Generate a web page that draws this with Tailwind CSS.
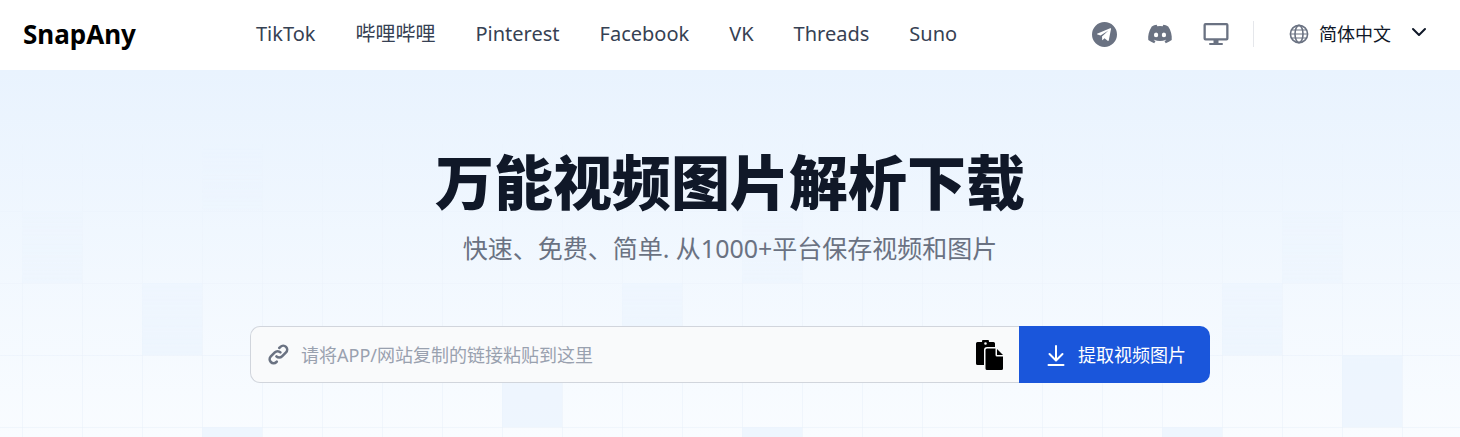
<!DOCTYPE html>
<html lang="zh-CN">
<head>
    <meta charset="UTF-8">
    <meta name="viewport" content="width=device-width, initial-scale=1.0">
    <title>SnapAny</title>
    <script src="https://cdn.jsdelivr.net/npm/@tailwindcss/browser@4"></script>
</head>
<body class="min-h-screen flex flex-col bg-white font-['Noto_Sans','Noto_Sans_CJK_SC',sans-serif]">
    <header class="flex items-center h-[70px] pb-[2px] pl-[23px] pr-[33px]">
        <a href="#" class="w-[233px] text-[26px] leading-8 font-bold text-black">SnapAny</a>
        <nav class="flex flex-1 gap-10 text-xl text-gray-700">
            <a href="#">TikTok</a>
            <a href="#">哔哩哔哩</a>
            <a href="#">Pinterest</a>
            <a href="#">Facebook</a>
            <a href="#">VK</a>
            <a href="#">Threads</a>
            <a href="#">Suno</a>
        </nav>
        <div class="flex items-center text-gray-500">
            <div class="flex items-center gap-[30px] pr-6">
                <a href="#" aria-label="Telegram">
                    <svg class="size-[25px]" viewBox="0 0 24 24" fill="currentColor"><path d="M12 0a12 12 0 1 0 0 24 12 12 0 0 0 0-24Zm6.300 6.400-2.200 11.200c-.1.7-.5.8-1.100.5l-3-2.400-1.700 1.600c-.2.2-.4.2-.5-.1l-.2-3.300 6.200-5.800-7.600 4.900-2.900-1c-.7-.2-.7-.7.1-1l12-4.900c.6-.2 1 0 .9.300Z"/></svg>
                </a>
                <a href="#" aria-label="Discord">
                    <svg class="size-[26px]" viewBox="1 1 22 22" fill="currentColor"><path d="M18.942 5.556a16.3 16.3 0 0 0-4.126-1.297c-.178.321-.385.754-.529 1.097a15.175 15.175 0 0 0-4.573 0 11.583 11.583 0 0 0-.535-1.097 16.274 16.274 0 0 0-4.129 1.3c-2.611 3.946-3.319 7.794-2.965 11.587a16.494 16.494 0 0 0 5.061 2.593 12.65 12.65 0 0 0 1.084-1.785 10.689 10.689 0 0 1-1.707-.831c.143-.106.283-.217.418-.331 3.291 1.539 6.866 1.539 10.118 0 .137.114.277.225.418.331-.541.326-1.114.606-1.71.832a12.52 12.52 0 0 0 1.084 1.785 16.46 16.46 0 0 0 5.064-2.595c.415-4.396-.709-8.209-2.973-11.589ZM8.678 14.813a1.940 1.940 0 0 1-1.800-2.045 1.930 1.930 0 0 1 1.800-2.047 1.919 1.919 0 0 1 1.800 2.047 1.930 1.930 0 0 1-1.800 2.045Zm6.644 0a1.940 1.940 0 0 1-1.800-2.045 1.930 1.930 0 0 1 1.800-2.047 1.918 1.918 0 0 1 1.800 2.047 1.930 1.930 0 0 1-1.800 2.045Z"/></svg>
                </a>
                <a href="#" aria-label="Desktop">
                    <svg class="size-[26px]" viewBox="0 0 26 26" fill="currentColor"><path fill-rule="evenodd" d="M2.500 2h21A2 2 0 0 1 25.500 4v13.500a2 2 0 0 1-2 2H15.500v2.500H19a1 1 0 0 1 0 2H7a1 1 0 0 1 0-2h3.500v-2.500H2.500a2 2 0 0 1-2-2V4a2 2 0 0 1 2-2Zm.3 2.300v12.900h20.400V4.300Z"/></svg>
                </a>
            </div>
            <button type="button" class="flex items-center h-[26px] border-l border-gray-200 pl-[35px] text-lg text-gray-900">
                <svg class="size-5 mr-[10px] text-gray-500" viewBox="0 0 20 20" fill="none" stroke="currentColor" stroke-width="1.600"><circle cx="10" cy="10" r="8.600"/><ellipse cx="10" cy="10" rx="4" ry="8.600"/><path d="M1.400 10h17.200M2.800 6h14.400M2.800 14h14.400" stroke-width="1.200"/></svg>
                简体中文
                <svg class="size-4 ml-5 mb-1" viewBox="0 0 16 16" fill="none" stroke="currentColor" stroke-width="2" stroke-linecap="round" stroke-linejoin="round"><path d="m2 5 6 6 6-6"/></svg>
            </button>
        </div>
    </header>

    <main class="relative isolate flex-1 overflow-hidden bg-linear-to-b from-[#e9f3fe] to-[#f9fcff]">
        <!-- faint grid with tinted cells -->
        <svg class="absolute inset-0 -z-10 w-full h-full" aria-hidden="true">
            <defs>
                <pattern id="grid" x="22" y="69" width="60" height="72" patternUnits="userSpaceOnUse">
                    <path d="M0 .5H60M.5 0V72" fill="none" stroke="#e7f0fa" stroke-opacity=".5"/>
                </pattern>
                <linearGradient id="fade" x1="0" y1="0" x2="0" y2="1">
                    <stop offset="0.2" stop-color="#000"/>
                    <stop offset="0.8" stop-color="#fff"/>
                </linearGradient>
                <mask id="fade-mask"><rect width="100%" height="100%" fill="url(#fade)"/></mask>
            </defs>
            <g mask="url(#fade-mask)">
                <rect width="100%" height="100%" fill="url(#grid)"/>
                <g fill="#ebf4fe" fill-opacity=".8">
                    <rect x="22" y="141" width="60" height="72"/>
                    <rect x="142" y="213" width="60" height="72"/>
                    <rect x="202" y="69" width="60" height="72"/>
                    <rect x="202" y="357" width="60" height="72"/>
                    <rect x="502" y="285" width="60" height="72"/>
                    <rect x="622" y="213" width="60" height="72"/>
                    <rect x="742" y="141" width="60" height="72"/>
                    <rect x="742" y="357" width="60" height="72"/>
                    <rect x="1162" y="357" width="60" height="72"/>
                    <rect x="1222" y="213" width="60" height="72"/>
                    <rect x="1282" y="141" width="60" height="72"/>
                    <rect x="1342" y="285" width="60" height="72"/>
                </g>
            </g>
        </svg>

        <div class="max-w-[960px] mx-auto pt-[76px] text-center">
            <h1 class="text-[59px] leading-[72px] font-black text-gray-900">万能视频图片解析下载</h1>
            <p class="mt-3 text-[25px] leading-9 text-gray-500">快速、免费、简单. 从1000+平台保存视频和图片</p>
            <form class="flex mt-[60px] h-[57px]">
                <div class="flex flex-1 items-center rounded-l-[10px] border border-r-0 border-gray-300 bg-gray-50 pl-[14px] pr-4">
                    <svg class="size-7 text-gray-500" viewBox="0 0 24 24" fill="none" stroke="currentColor" stroke-width="2.200" stroke-linecap="round" stroke-linejoin="round"><path d="M13.213 9.787a3.391 3.391 0 0 0-4.795 0l-3.425 3.426a3.390 3.390 0 0 0 4.795 4.794l.321-.304m-.321-4.490a3.390 3.390 0 0 0 4.795 0l3.424-3.426a3.390 3.390 0 0 0-4.794-4.795l-1.028.961"/></svg>
                    <input type="url" aria-label="链接" placeholder="请将APP/网站复制的链接粘贴到这里" class="flex-1 pl-2 text-lg text-gray-900 placeholder:text-gray-400 outline-none">
                    <button type="button" aria-label="粘贴" class="text-black">
                        <svg class="w-[27px] h-[30px]" viewBox="0 0 27 30" fill="currentColor"><path fill-rule="evenodd" d="M1.500 2H6a3.500 3.500 0 0 1 7 0h4.500A1.500 1.500 0 0 1 19 3.500V7h-8a3 3 0 0 0-3 3v15H1.500A1.500 1.500 0 0 1 0 23.500v-20A1.500 1.500 0 0 1 1.500 2Zm8 .2a1.300 1.300 0 1 0 0 2.600 1.300 1.300 0 0 0 0-2.600Z"/><path d="M11 8.500h8.500V15a1.500 1.500 0 0 0 1.500 1.500h6v12a1.500 1.500 0 0 1-1.500 1.500h-14.500A1.500 1.500 0 0 1 9.500 28.500V10A1.500 1.500 0 0 1 11 8.500Z"/><path d="M21 9v6h6Z"/></svg>
                    </button>
                </div>
                <button type="submit" class="flex items-center rounded-r-[10px] bg-[#1a56db] pl-[27px] pr-6 text-lg text-white">
                    <svg class="w-5 h-6 mr-3" viewBox="0 0 20 24" fill="none" stroke="currentColor" stroke-width="2" stroke-linecap="round" stroke-linejoin="round"><path d="M10 3v14M3.500 11l6.500 6.500 6.500-6.500M2.500 22h15"/></svg>
                    提取视频图片
                </button>
            </form>
        </div>
    </main>
</body>
</html>
